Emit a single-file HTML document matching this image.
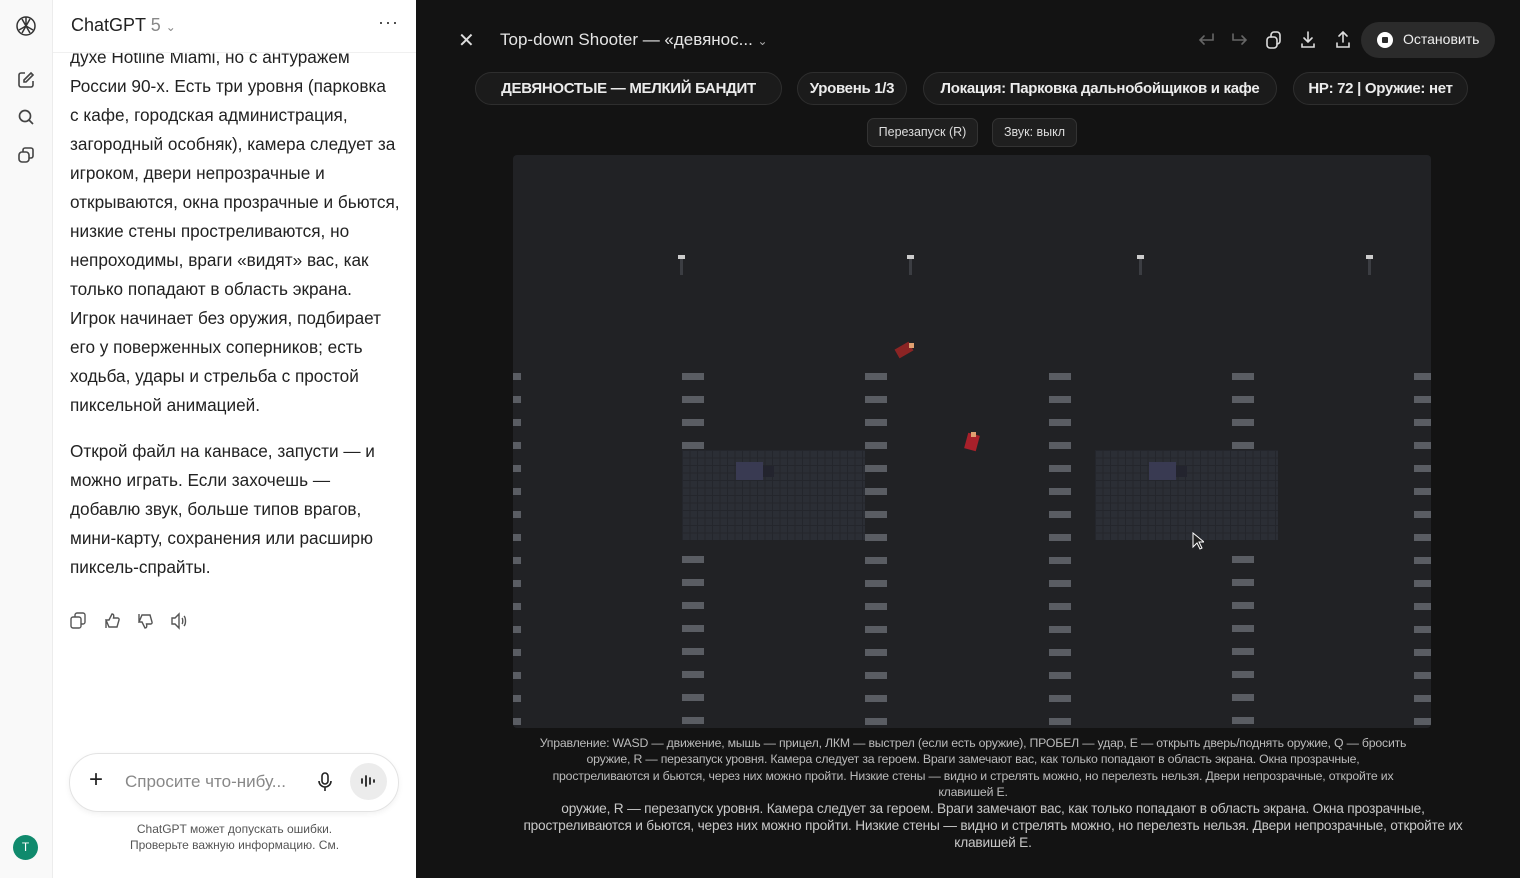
<!DOCTYPE html>
<html><head><meta charset="utf-8"><style>
*{margin:0;padding:0;box-sizing:border-box}
body{width:1520px;height:878px;overflow:hidden;font-family:"Liberation Sans","Noto Sans CJK SC",sans-serif;background:#121212;position:relative}
.abs{position:absolute}
#side{left:0;top:0;width:53px;height:878px;background:#f9f9f9;border-right:1px solid #ececec}
#chat{left:53px;top:0;width:363px;height:878px;background:#fff}
.p{position:absolute;left:17px;width:345px;font-size:17.2px;line-height:29px;color:#222;white-space:nowrap}
#right{left:416px;top:0;width:1104px;height:878px;background:#131313}
.pill{position:absolute;top:72px;height:33px;border:1px solid #2e2e2e;background:#1b1b1b;border-radius:17px;color:#ececec;font-weight:bold;font-size:15px;line-height:31px;text-align:center;letter-spacing:-0.3px}
.btn{position:absolute;top:118px;height:29px;border:1px solid #333;background:#1f1f1f;border-radius:7px;color:#ddd;font-size:12.5px;line-height:27px;text-align:center}
#game{left:513px;top:155px;width:918px;height:573px;background:#212225;border-radius:4px;overflow:hidden}
.col{position:absolute;background:repeating-linear-gradient(to bottom,#5a5d63 0 7px,transparent 7px 23px)}
.bld{position:absolute;top:295px;height:90px;background-color:#2b2e35;background-image:linear-gradient(#24262c 1px,transparent 1px),linear-gradient(90deg,#24262c 1px,transparent 1px);background-size:7.5px 7.5px}
.lamp{position:absolute;top:100px;width:3px;height:20px;background:#3b3d42}
.lamp:before{content:"";position:absolute;left:-2px;top:0;width:7px;height:4px;background:#ccc}
.info{position:absolute;color:#bbb;font-size:12.3px;line-height:16.3px;text-align:center;white-space:nowrap;letter-spacing:-0.2px}
</style></head><body>
<div id="side" class="abs">
<svg class="abs" style="left:14px;top:14px" width="24" height="24" viewBox="0 0 24 24" fill="none" stroke="#333" stroke-width="1.5"><circle cx="12" cy="12" r="9"/><path d="M12 3v9l7 4M12 12l-7 4M8 5l8 14M16 5L8 19"/></svg>
<svg class="abs" style="left:17px;top:71px" width="18" height="18" viewBox="0 0 18 18" fill="none" stroke="#444" stroke-width="1.6"><path d="M8 2H4a2 2 0 0 0-2 2v10a2 2 0 0 0 2 2h10a2 2 0 0 0 2-2v-4"/><path d="M14 2l2 2-7 7H7V9z"/></svg>
<svg class="abs" style="left:17px;top:108px" width="18" height="18" viewBox="0 0 18 18" fill="none" stroke="#444" stroke-width="1.7"><circle cx="8" cy="8" r="5.5"/><path d="M12 12l4 4"/></svg>
<svg class="abs" style="left:17px;top:146px" width="18" height="18" viewBox="0 0 18 18" fill="none" stroke="#444" stroke-width="1.6"><rect x="2" y="6" width="10" height="10" rx="3"/><path d="M6 6V4a2 2 0 0 1 2-2h6a2 2 0 0 1 2 2v6a2 2 0 0 1-2 2h-2"/></svg>
<div class="abs" style="left:13px;top:835px;width:25px;height:25px;border-radius:50%;background:#108a6d;color:#fff;font-size:12px;line-height:25px;text-align:center">T</div>
</div>
<div id="chat" class="abs">
<div class="abs" style="left:0;top:0;width:363px;height:53px;border-bottom:1px solid #f0f0f0;background:#fff;z-index:2"></div>
<div class="abs" style="left:18px;top:15px;font-size:18px;color:#222;z-index:3">ChatGPT <span style="color:#888">5</span> <span style="color:#888;font-size:12px">&#8964;</span></div>
<div class="abs" style="left:325px;top:12px;font-size:18px;color:#333;z-index:3;letter-spacing:1px">···</div>
<div class="p" style="top:43px">духе Hotline Miami, но с антуражем<br>России 90-х. Есть три уровня (парковка<br>с кафе, городская администрация,<br>загородный особняк), камера следует за<br>игроком, двери непрозрачные и<br>открываются, окна прозрачные и бьются,<br>низкие стены простреливаются, но<br>непроходимы, враги «видят» вас, как<br>только попадают в область экрана.<br>Игрок начинает без оружия, подбирает<br>его у поверженных соперников; есть<br>ходьба, удары и стрельба с простой<br>пиксельной анимацией.</div>
<div class="p" style="top:437px">Открой файл на канвасе, запусти — и<br>можно играть. Если захочешь —<br>добавлю звук, больше типов врагов,<br>мини-карту, сохранения или расширю<br>пиксель-спрайты.</div>
<svg class="abs" style="left:17px;top:612px" width="120" height="18" viewBox="0 0 120 18" fill="none" stroke="#555" stroke-width="1.4"><rect x="1" y="5" width="10" height="11" rx="2"/><path d="M5 5V3a2 2 0 0 1 2-2h6a2 2 0 0 1 2 2v7a2 2 0 0 1-2 2h-2"/><path d="M36 8h3l3-6c2 0 2 2 1.5 4H48a1.5 1.5 0 0 1 1 2l-2 7H39zM36 8v8"/><path d="M69 10h3l3 6c2 0 2-2 1.5-4H81a1.5 1.5 0 0 0 1-2l-2-7H72zM69 10V2"/><path d="M102 6h3l4-4v14l-4-4h-3zM112 6c1 1 1 5 0 6M114 4c2 2 2 8 0 10"/></svg>
<div class="abs" style="left:16px;top:753px;width:330px;height:59px;border:1px solid #e3e3e3;border-radius:30px;box-shadow:0 2px 6px rgba(0,0,0,.06)"></div>
<div class="abs" style="left:36px;top:766px;font-size:24px;color:#222;font-weight:300">+</div>
<div class="abs" style="left:72px;top:772px;font-size:17px;color:#888">Спросите что-нибу...</div>
<svg class="abs" style="left:264px;top:772px" width="16" height="20" viewBox="0 0 16 20" fill="none" stroke="#222" stroke-width="1.6"><rect x="5" y="1" width="6" height="11" rx="3"/><path d="M2 9a6 6 0 0 0 12 0M8 15v4"/></svg>
<div class="abs" style="left:297px;top:763px;width:37px;height:37px;border-radius:50%;background:#ececec"></div>
<svg class="abs" style="left:306px;top:773px" width="18" height="16" viewBox="0 0 18 16" stroke="#222" stroke-width="1.8" stroke-linecap="round"><path d="M3 6v4M7 3v10M11 5v6M15 7v2"/></svg>
<div class="abs" style="left:0;width:363px;top:821px;font-size:12px;line-height:16px;color:#555;text-align:center">ChatGPT может допускать ошибки.<br>Проверьте важную информацию. См.</div>
</div>
<div id="right" class="abs">
<div class="abs" style="left:42px;top:28px;color:#ddd;font-size:20px">✕</div>
<div class="abs" style="left:84px;top:30px;color:#e5e5e5;font-size:17px">Top-down Shooter — «девянос... <span style="color:#aaa;font-size:12px">&#8964;</span></div>
<svg class="abs" style="left:780px;top:30px" width="160" height="20" viewBox="0 0 160 20" fill="none" stroke-width="1.6" stroke-linecap="round"><path d="M17 4v6H4M8 6l-4 4 4 4" stroke="#666"/><path d="M37 4v6h13M46 6l4 4-4 4" stroke="#666"/><g stroke="#ddd"><rect x="71" y="7" width="10" height="11" rx="3"/><path d="M75 7V5a3 3 0 0 1 3-3h3a3 3 0 0 1 3 3v6a3 3 0 0 1-3 3"/><path d="M112 2v10M108 8l4 4 4-4M106 14v3h12v-3"/><path d="M147 12V2M143 6l4-4 4 4M141 13v4h12v-4"/></g></svg>
<div class="abs" style="left:945px;top:22px;width:134px;height:36px;border-radius:18px;background:#2b2b2b"></div>
<div class="abs" style="left:961px;top:32px;width:16px;height:16px;border-radius:50%;background:#fff"><div style="margin:5px;width:6px;height:6px;background:#2b2b2b;border-radius:1px"></div></div>
<div class="abs" style="left:987px;top:31px;color:#eee;font-size:14px">Остановить</div>
<div class="pill" style="left:59px;width:307px">ДЕВЯНОСТЫЕ — МЕЛКИЙ БАНДИТ</div>
<div class="pill" style="left:381px;width:110px">Уровень 1/3</div>
<div class="pill" style="left:507px;width:354px">Локация: Парковка дальнобойщиков и кафе</div>
<div class="pill" style="left:877px;width:175px">HP: 72 | Оружие: нет</div>
<div class="btn" style="left:451px;width:111px">Перезапуск (R)</div>
<div class="btn" style="left:576px;width:85px">Звук: выкл</div>
<div class="info" style="left:50px;width:1014px;top:735px">Управление: WASD — движение, мышь — прицел, ЛКМ — выстрел (если есть оружие), ПРОБЕЛ — удар, E — открыть дверь/поднять оружие, Q — бросить<br>оружие, R — перезапуск уровня. Камера следует за героем. Враги замечают вас, как только попадают в область экрана. Окна прозрачные,<br>простреливаются и бьются, через них можно пройти. Низкие стены — видно и стрелять можно, но перелезть нельзя. Двери непрозрачные, откройте их<br>клавишей E.</div>
<div class="info" style="left:25px;width:1104px;top:800px;font-size:13.7px;line-height:17px;color:#c8c8c8">оружие, R — перезапуск уровня. Камера следует за героем. Враги замечают вас, как только попадают в область экрана. Окна прозрачные,<br>простреливаются и бьются, через них можно пройти. Низкие стены — видно и стрелять можно, но перелезть нельзя. Двери непрозрачные, откройте их<br>клавишей E.</div>
</div>
<div id="game" class="abs">
<div class="lamp" style="left:167px"></div><div class="lamp" style="left:396px"></div><div class="lamp" style="left:626px"></div><div class="lamp" style="left:855px"></div>
<div class="col" style="left:0;width:8px;top:218px;height:355px"></div>
<div class="col" style="left:169px;width:22px;top:218px;height:85px"></div>
<div class="col" style="left:169px;width:22px;top:401px;height:172px"></div>
<div class="col" style="left:352px;width:22px;top:218px;height:355px"></div>
<div class="col" style="left:536px;width:22px;top:218px;height:355px"></div>
<div class="col" style="left:719px;width:22px;top:218px;height:85px"></div>
<div class="col" style="left:719px;width:22px;top:401px;height:172px"></div>
<div class="col" style="left:901px;width:17px;top:218px;height:355px"></div>
<div class="bld" style="left:169px;width:183px"><div class="abs" style="left:54px;top:12px;width:27px;height:18px;background:#393a52"></div><div class="abs" style="left:81px;top:16px;width:11px;height:11px;background:#23242e"></div></div>
<div class="bld" style="left:582px;width:183px"><div class="abs" style="left:54px;top:12px;width:27px;height:18px;background:#393a52"></div><div class="abs" style="left:81px;top:16px;width:11px;height:11px;background:#23242e"></div></div>
<div class="abs" style="left:383px;top:190px;width:16px;height:10px;background:#8b2424;transform:rotate(-30deg)"></div><div class="abs" style="left:396px;top:188px;width:5px;height:5px;background:#e0a070"></div>
<div class="abs" style="left:453px;top:279px;width:12px;height:16px;background:#a8202a;transform:rotate(15deg)"></div><div class="abs" style="left:458px;top:277px;width:5px;height:5px;background:#e0a070"></div>
<svg class="abs" style="left:679px;top:377px" width="12" height="18" viewBox="0 0 12 18"><path d="M1 1v14l4-4 3 6 2-1-3-6h5z" fill="#222" stroke="#fff" stroke-width="1"/></svg>
</div>
</body></html>
